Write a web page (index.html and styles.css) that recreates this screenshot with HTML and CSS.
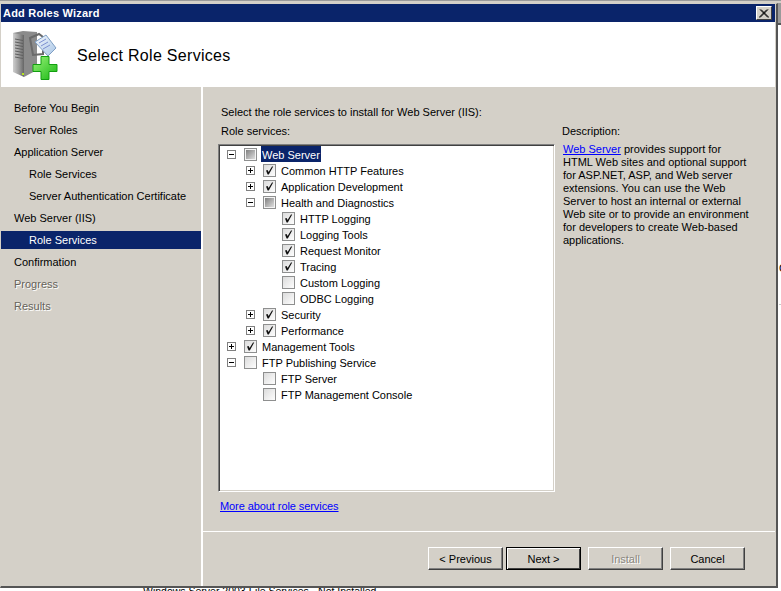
FILE: index.html
```html
<!DOCTYPE html>
<html lang="en">
<head>
<meta charset="utf-8">
<title>Add Roles Wizard</title>
<link rel="stylesheet" href="styles.css">
</head>
<body>
<svg class="defs" width="0" height="0" aria-hidden="true">
  <defs>
    <linearGradient id="mix" x1="0" y1="0" x2="1" y2="1"><stop offset="0" stop-color="#7f7f7f"/><stop offset="1" stop-color="#dedede"/></linearGradient>
    <linearGradient id="box" x1="0" y1="0" x2="1" y2="1"><stop offset="0" stop-color="#dadada"/><stop offset="1" stop-color="#ffffff"/></linearGradient>
    <symbol id="chk-on" viewBox="0 0 13 13">
      <rect x="0.5" y="0.5" width="12" height="12" fill="url(#box)" stroke="#8e8f8f"/>
      <path d="M3 6.5L4.6 6L5.6 8L9 2.5H10.2L5.8 10.5H4.6Z" fill="#111"/>
    </symbol>
    <symbol id="chk-off" viewBox="0 0 13 13">
      <rect x="0.5" y="0.5" width="12" height="12" fill="url(#box)" stroke="#8e8f8f"/>
    </symbol>
    <symbol id="chk-mix" viewBox="0 0 13 13">
      <rect x="0.5" y="0.5" width="12" height="12" fill="#f4f4f4" stroke="#8e8f8f"/>
      <rect x="2" y="2" width="9" height="9" fill="url(#mix)"/>
    </symbol>
    <symbol id="exp-plus" viewBox="0 0 9 9">
      <rect x="0.5" y="0.5" width="8" height="8" fill="#fff" stroke="#808080"/>
      <path d="M2 4.5H7M4.5 2V7" stroke="#000" fill="none"/>
    </symbol>
    <symbol id="exp-minus" viewBox="0 0 9 9">
      <rect x="0.5" y="0.5" width="8" height="8" fill="#fff" stroke="#808080"/>
      <path d="M2 4.5H7" stroke="#000" fill="none"/>
    </symbol>
  </defs>
</svg>
<div class="screen">
  <div class="desktop-top"></div>
  <div class="middle">
    <main class="window">
      <div class="titlebar">
        <span class="title">Add Roles Wizard</span>
        <button class="close" aria-label="Close">
          <svg width="10" height="9" viewBox="0 0 10 9"><path d="M1 0.5L9 8.5M9 0.5L1 8.5M2 0.5L10 8.5M8 0.5L0 8.5" stroke="#000" fill="none"/></svg>
        </button>
      </div>
      <header class="banner">
        <svg class="logo" width="48" height="50" viewBox="0 0 48 50">
          <defs>
            <linearGradient id="srv" x1="0" y1="0" x2="1" y2="0"><stop offset="0" stop-color="#cfcfcf"/><stop offset="0.55" stop-color="#9a9a9a"/><stop offset="1" stop-color="#666"/></linearGradient>
            <linearGradient id="grn" x1="0" y1="0" x2="1" y2="1"><stop offset="0" stop-color="#9af27a"/><stop offset="1" stop-color="#18b812"/></linearGradient>
            <linearGradient id="tag" x1="0" y1="0" x2="1" y2="1"><stop offset="0" stop-color="#f4f8fd"/><stop offset="1" stop-color="#a9c6e6"/></linearGradient>
          </defs>
          <path d="M0 3L10 1L24 2V40L11 47Z" fill="#8b8b8b"/>
          <path d="M0 3L11 5V47L0 42Z" fill="url(#srv)"/>
          <path d="M2 9L10 10.5M2 12L10 13.5M2 15L10 16.5M2 18L10 19.5M2 21L10 22.5M2 24L10 25.5M2 27L10 28.5" stroke="#5f5f5f" fill="none"/>
          <rect x="9" y="43" width="2" height="2" fill="#b5e61d"/>
          <path d="M17 8L26 4L30 7V24L20 25Z" fill="none" stroke="#6a6a6a" stroke-width="2"/>
          <path d="M22 12L33 5L43 18L35 26Z" fill="url(#tag)" stroke="#7f9fc4"/>
          <path d="M26 13L33 9M28 16L35 12M30 19L37 15" stroke="#7d8fd0" fill="none"/>
          <path d="M28 26.500H36V34.500H44V41.500H36V49.500H28V41.500H20V34.500H28Z" fill="url(#grn)" stroke="#139f10"/>
        </svg>
        <h1 class="heading">Select Role Services</h1>
      </header>
      <div class="body">
        <nav class="steps">
          <div class="step">Before You Begin</div>
          <div class="step">Server Roles</div>
          <div class="step">Application Server</div>
          <div class="step sub">Role Services</div>
          <div class="step sub">Server Authentication Certificate</div>
          <div class="step">Web Server (IIS)</div>
          <div class="step sub current">Role Services</div>
          <div class="step">Confirmation</div>
          <div class="step off">Progress</div>
          <div class="step off">Results</div>
        </nav>
        <div class="panel">
          <section class="content">
            <p class="intro">Select the role services to install for Web Server (IIS):</p>
            <div class="columns">
              <div class="services">
                <div class="label services-label">Role services:</div>
                <div class="tree">
                  <div class="row l0"><svg class="exp"><use href="#exp-minus"/></svg><svg class="chk"><use href="#chk-mix"/></svg><span class="name sel">Web Server</span></div>
                  <div class="row l1"><svg class="exp"><use href="#exp-plus"/></svg><svg class="chk"><use href="#chk-on"/></svg><span class="name">Common HTTP Features</span></div>
                  <div class="row l1"><svg class="exp"><use href="#exp-plus"/></svg><svg class="chk"><use href="#chk-on"/></svg><span class="name">Application Development</span></div>
                  <div class="row l1"><svg class="exp"><use href="#exp-minus"/></svg><svg class="chk"><use href="#chk-mix"/></svg><span class="name">Health and Diagnostics</span></div>
                  <div class="row l2"><span class="exp"></span><svg class="chk"><use href="#chk-on"/></svg><span class="name">HTTP Logging</span></div>
                  <div class="row l2"><span class="exp"></span><svg class="chk"><use href="#chk-on"/></svg><span class="name">Logging Tools</span></div>
                  <div class="row l2"><span class="exp"></span><svg class="chk"><use href="#chk-on"/></svg><span class="name">Request Monitor</span></div>
                  <div class="row l2"><span class="exp"></span><svg class="chk"><use href="#chk-on"/></svg><span class="name">Tracing</span></div>
                  <div class="row l2"><span class="exp"></span><svg class="chk"><use href="#chk-off"/></svg><span class="name">Custom Logging</span></div>
                  <div class="row l2"><span class="exp"></span><svg class="chk"><use href="#chk-off"/></svg><span class="name">ODBC Logging</span></div>
                  <div class="row l1"><svg class="exp"><use href="#exp-plus"/></svg><svg class="chk"><use href="#chk-on"/></svg><span class="name">Security</span></div>
                  <div class="row l1"><svg class="exp"><use href="#exp-plus"/></svg><svg class="chk"><use href="#chk-on"/></svg><span class="name">Performance</span></div>
                  <div class="row l0"><svg class="exp"><use href="#exp-plus"/></svg><svg class="chk"><use href="#chk-on"/></svg><span class="name">Management Tools</span></div>
                  <div class="row l0"><svg class="exp"><use href="#exp-minus"/></svg><svg class="chk"><use href="#chk-off"/></svg><span class="name">FTP Publishing Service</span></div>
                  <div class="row l1"><span class="exp"></span><svg class="chk"><use href="#chk-off"/></svg><span class="name">FTP Server</span></div>
                  <div class="row l1"><span class="exp"></span><svg class="chk"><use href="#chk-off"/></svg><span class="name">FTP Management Console</span></div>
                </div>
                <a class="link more" href="#">More about role services</a>
              </div>
              <aside class="desc">
                <div class="label">Description:</div>
                <p class="desc-text"><a class="link" href="#">Web Server</a> provides support for HTML Web sites and optional support for ASP.NET, ASP, and Web server extensions. You can use the Web Server to host an internal or external Web site or to provide an environment for developers to create Web-based applications.</p>
              </aside>
            </div>
          </section>
          <footer class="actions">
            <button class="btn first">&lt; Previous</button>
            <button class="btn default">Next &gt;</button>
            <button class="btn disabled" disabled>Install</button>
            <button class="btn">Cancel</button>
          </footer>
        </div>
      </div>
    </main>
    <div class="desktop-side">
      <div class="side-top"></div>
      <div class="side-text">C</div>
    </div>
  </div>
  <div class="behind">Windows Server 2003 File Services - Not Installed</div>
</div>
</body>
</html>
```
FILE: styles.css
```css
* { box-sizing: border-box; }
html, body { margin: 0; padding: 0; }
body {
  width: 781px;
  height: 591px;
  overflow: hidden;
  background: #fff;
  font-family: "Liberation Sans", Arial, sans-serif;
  font-size: 11px;
  color: #000;
}
.defs { position: absolute; }
.screen { display: flex; flex-direction: column; height: 591px; }
.desktop-top { height: 3px; flex: none; background: #d4d0c8; border-top: 1px solid #9a9a9a; }
.middle { display: flex; height: 585px; flex: none; }
.window {
  width: 778px;
  height: 585px;
  flex: none;
  display: flex;
  flex-direction: column;
  background: #d4d0c8;
  border: 1px solid #d4d0c8;
  border-right: 2px solid #555;
  border-bottom: 2px solid #555;
  padding-right: 1px;
}
.titlebar {
  height: 18px;
  background: #0a246a;
  color: #fff;
  display: flex;
  align-items: center;
  justify-content: space-between;
  padding: 0 3px 0 2px;
  flex: none;
}
.title { font-weight: 700; font-size: 11px; letter-spacing: 0.2px; }
.close {
  width: 16px;
  height: 14px;
  padding: 0;
  display: flex;
  align-items: center;
  justify-content: center;
  background: #d4d0c8;
  border: 1px solid;
  border-color: #fff #404040 #404040 #fff;
}
.banner {
  height: 65px;
  flex: none;
  background: #fff;
  display: flex;
  align-items: center;
  padding-left: 12px;
}
.logo { flex: none; }
.heading {
  margin: 2px 0 0 16px;
  font-size: 16px;
  font-weight: 400;
  letter-spacing: 0.3px;
}
.body { flex: 1; display: flex; min-height: 0; }
.steps {
  width: 202px;
  flex: none;
  padding-top: 12px;
  display: flex;
  flex-direction: column;
  gap: 4px;
  border-right: 2px solid #fff;
}
.step { height: 18px; line-height: 18px; padding-left: 13px; }
.step.sub { padding-left: 28px; }
.step.current { background: #0a246a; color: #fff; }
.step.off { color: #66635a; text-shadow: 1px 1px 0 #fff; }
.panel { flex: 1; display: flex; flex-direction: column; min-width: 0; }
.content {
  height: 445px;
  flex: none;
  padding: 18px 0 0 15px;
  border-bottom: 1px solid #fff;
}
.intro { margin: 0 0 6px 3px; height: 14px; line-height: 14px; }
.columns { display: flex; }
.services { width: 343px; flex: none; }
.label { height: 14px; line-height: 12px; margin-left: 1px; }
.services-label { margin-left: 3px; }
.tree {
  width: 337px;
  height: 348px;
  margin-top: 5px;
  padding-top: 1px;
  background: #fff;
  border: 1px solid;
  border-color: #808080 #fff #fff #808080;
  box-shadow: inset 1px 1px 0 #404040, inset -1px -1px 0 #d4d0c8;
}
.row { height: 16px; display: flex; align-items: center; }
.row.l0 { padding-left: 8px; }
.row.l1 { padding-left: 27px; }
.row.l2 { padding-left: 46px; }
.exp { width: 9px; height: 9px; flex: none; display: block; }
.chk { width: 13px; height: 13px; flex: none; margin-left: 8px; display: block; }
.name { margin-left: 4px; padding: 0 1px; height: 16px; line-height: 18px; white-space: nowrap; }
.name.sel { background: #0a246a; color: #fff; }
.link { color: #00f; text-decoration: underline; }
.more { display: inline-block; margin: 8px 0 0 2px; letter-spacing: -0.08px; }
.desc { width: 200px; flex: none; }
.desc-text { margin: 4px 0 0 2px; width: 187px; line-height: 13px; }
.actions {
  flex: 1;
  display: flex;
  align-items: flex-start;
  padding: 15px 0 0 225px;
}
.btn {
  width: 75px;
  height: 23px;
  padding: 1px 0 0;
  background: #d4d0c8;
  border: 1px solid;
  border-color: #fff #404040 #404040 #fff;
  box-shadow: inset -1px -1px 0 #808080;
  font: inherit;
  color: #000;
  margin-left: 7px;
}
.btn.first { margin-left: 0; }
.btn.default {
  margin-left: 3px;
  border-color: #000;
  box-shadow: inset 1px 1px 0 #fff, inset -1px -1px 0 #404040;
}
.btn.disabled { color: #8a877f; text-shadow: 1px 1px 0 #fff; }
.desktop-side { width: 3px; flex: none; overflow: hidden; background: #fff; }
.side-top { height: 22px; background: #9a9a9a; border-bottom: 2px solid #555; }
.side-text { margin: 236px 0 0 1px; height: 44px; line-height: 14px; border-bottom: 1px solid #c8c8c8; }
.behind {
  height: 3px;
  flex: none;
  padding-left: 143px;
  overflow: hidden;
  line-height: 6px;
  font-size: 10.5px;
  white-space: nowrap;
  background: #fff;
}
```
